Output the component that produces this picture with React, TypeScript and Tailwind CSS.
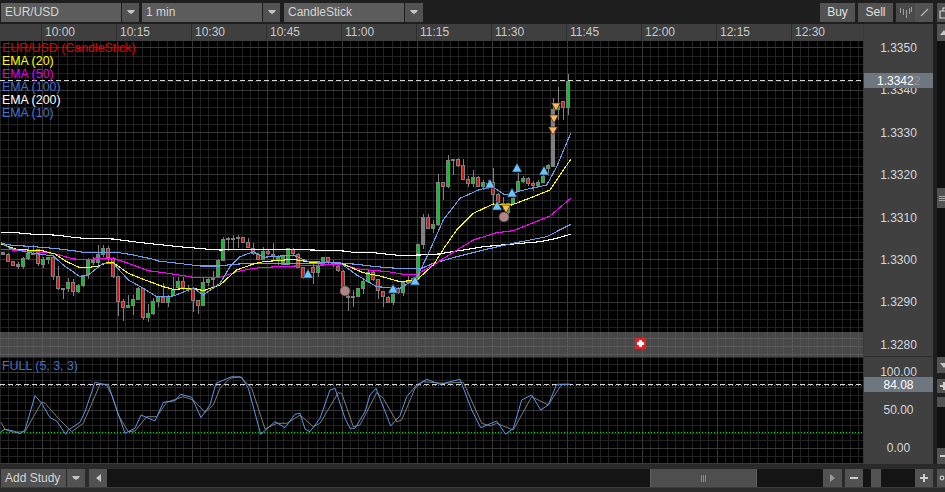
import React from "react";

type C = [number, number, number, number, string];
// wick top, body top, body bottom, wick bottom, colour; measured in 3x crop coordinates
const c4: C[] = [
  [97,97,104,104,"n"],[100,103,125,128,"r"],[123,123,137,138,"r"],[127,133,140,147,"n"],[110,114,141,145,"g"],[80,100,116,120,"g"],[75,98,100,105,"n"],[88,88,133,140,"r"],[110,118,134,143,"g"],[110,112,120,132,"g"],
  [104,110,170,180,"r"],[138,168,208,210,"r"],[205,205,208,237,"n"],[175,186,207,217,"g"],[178,186,215,228,"r"],[192,196,216,220,"g"],[164,166,198,200,"g"],[115,120,165,177,"g"],[112,120,130,135,"n"],[75,103,130,135,"g"],
  [75,85,105,110,"g"],[78,85,115,125,"r"],[110,113,170,172,"r"],[168,168,245,288,"r"],[238,243,263,305,"r"],[225,255,263,265,"g"],[225,238,257,285,"g"],[200,205,240,240,"g"],[203,205,293,298,"r"],[252,280,293,305,"g"],
  [233,243,282,285,"g"],[228,230,245,262,"g"],[190,232,248,250,"r"],[225,230,248,262,"g"],[172,207,228,230,"g"],[170,183,205,210,"g"],[172,183,205,210,"r"],[195,203,206,215,"n"],[200,205,242,275,"r"],[240,240,257,283,"r"],
  [172,186,257,260,"g"],[170,178,188,197,"g"],[153,175,178,205,"n"],[118,120,172,175,"g"],
];
const c5: C[] = [
  [52,57,122,125,"g"],[50,53,57,92,"n"],[45,54,56,88,"n"],[45,51,53,85,"n"],[52,52,68,70,"r"],[55,67,83,85,"r"],[70,85,103,105,"r"],[100,103,120,122,"r"],[82,92,120,122,"g"],[88,92,103,105,"r"],
  [68,102,104,120,"n"],[105,108,120,135,"g"],[105,105,135,136,"g"],[85,85,135,135,"g"],[85,87,103,110,"r"],[100,103,143,145,"r"],[140,142,173,175,"r"],[150,160,165,175,"n"],[128,142,158,192,"r"],[125,138,158,170,"g"],
  [110,112,135,137,"g"],[110,112,125,135,"r"],[120,126,128,140,"n"],[135,138,153,155,"r"],[150,152,200,205,"r"],[205,227,229,275,"n"],[210,227,229,262,"n"],[205,205,230,232,"g"],[180,183,207,222,"g"],[150,155,185,188,"g"],
  [150,155,180,182,"r"],[178,178,213,237,"r"],[213,213,230,260,"r"],[228,230,248,250,"r"],[200,222,248,255,"g"],[200,205,218,220,"r"],[183,187,218,228,"g"],[168,182,184,190,"n"],[170,175,185,190,"g"],
];
const c3: C[] = [
  [522,522,628,630,"g"],[432,442,525,538,"n"],[432,442,476,478,"r"],[450,462,478,488,"g"],[312,337,465,467,"g"],[335,337,352,390,"r"],[255,270,352,354,"g"],[268,267,269,315,"n"],[263,268,288,290,"r"],[268,285,330,332,"r"],
  [318,327,342,352,"r"],[300,322,342,352,"g"],[318,322,350,352,"r"],[330,335,352,360,"g"],[330,338,350,355,"n"],[295,335,375,402,"r"],[368,373,398,400,"r"],[382,399,401,420,"n"],[398,400,430,432,"g"],[365,383,402,405,"g"],
  [308,333,362,365,"g"],[318,323,337,340,"g"],[320,323,343,347,"r"],[332,338,348,362,"r"],[330,335,348,352,"g"],[315,318,338,340,"g"],[283,285,297,320,"g"],[85,118,290,292,"n"],[52,108,120,150,"g"],[92,94,115,150,"r"],[12,32,115,135,"g"],
];

const conv = (a: C[], oy: number): C[] =>
  a.map(([w1, b1, b2, w2, c]) => [oy + w1 / 3, oy + b1 / 3, oy + b2 / 3, oy + w2 / 3, c] as C);
const candles: C[] = [...conv(c4, 220), ...conv(c5, 220), ...conv(c3, 70)];

const P = (ox: number, oy: number, a: number[][]) => a.map(([x, y]) => `${(ox + x / 3).toFixed(1)},${(oy + y / 3).toFixed(1)}`);
const L = (a4: number[][], a5: number[][], a3: number[][]) =>
  [...P(0, 220, a4), ...P(220, 220, a5), ...P(400, 70, a3)].join(" ");

const lines = [
  { c: "#ffffff", p: L(
    [[3,37],[38,37],[100,43],[160,45],[190,48],[220,52],[250,55],[340,57],[385,63],[415,67],[460,72],[490,75],[535,80],[595,85],[625,88],[660,90]],
    [[115,88],[280,90],[370,93],[400,97],[460,98],[505,103],[535,106]],
    [[60,555],[115,552],[190,540],[250,530],[340,522],[420,515],[470,505],[512,493]]) },
  { c: "#6f9fe8", p: L(
    [[3,70],[30,75],[100,80],[160,85],[220,92],[250,97],[350,97],[400,105],[460,118],[475,123],[535,130],[600,138],[660,138]],
    [[40,133],[100,130],[200,132],[330,128],[400,132],[470,140],[530,145]],
    [[60,597],[100,580],[170,560],[250,540],[340,520],[440,500],[512,463]]) },
  { c: "#ff00ff", p: L(
    [[3,88],[40,90],[100,95],[160,100],[220,117],[265,118],[340,115],[385,130],[445,152],[505,160],[580,172],[660,172]],
    [[50,155],[100,145],[170,140],[360,133],[420,148],[505,155],[550,163]],
    [[50,613],[100,585],[150,553],[220,510],[290,488],[340,482],[400,458],[450,438],[512,385]]) },
  { c: "#ffff00", p: L(
    [[3,72],[50,88],[130,93],[165,102],[200,125],[240,143],[290,140],[320,128],[340,128],[385,160],[430,178],[490,200],[520,208],[580,205],[610,212],[660,195]],
    [[50,150],[100,132],[130,125],[220,118],[280,128],[360,128],[430,158],[480,168],[540,185]],
    [[50,630],[100,585],[135,530],[170,480],[220,430],[280,402],[335,405],[400,380],[450,360],[512,268]]) },
  { c: "#6f9fe8", p: L(
    [[3,68],[30,85],[100,100],[160,108],[190,135],[240,170],[265,165],[310,130],[340,130],[385,180],[430,205],[470,230],[520,228],[580,205],[610,225],[660,190]],
    [[30,140],[60,110],[100,95],[130,112],[220,105],[265,125],[360,128],[410,165],[470,200],[540,205]],
    [[50,625],[90,540],[130,450],[180,385],[240,358],[280,352],[315,375],[380,358],[440,345],[470,290],[512,190]]) },
];

const up = [[308,274],[393,289],[415,281],[490,184],[497,206],[512,193],[517,168],[544,171]];
const down = [[506,209],[553,131],[554,119],[556,107]];
const circles = [[345,291],[504,217]];

const Pz = (ox: number, a: number[][]) => a.map(([x, y]) => `${(ox + x / 3).toFixed(1)},${(325 + y / 3).toFixed(1)}`);
const fullBlue = [...Pz(0, [[3,320],[15,313],[40,318],[60,326],[75,315],[105,212],[125,235],[150,278],[170,288],[197,328],[205,315],[240,292],[255,260],[285,172],[320,180],[335,210],[375,325],[405,310],[423,270],[465,288],[490,232],[525,227],[542,208],[575,217],[603,278],[630,240],[648,175],[695,155],[725,157],[745,190],[782,328],[825,290],[855,308],[885,268]]),
  ...Pz(300, [[0,265],[15,312],[30,320],[60,280],[90,195],[105,190],[135,280],[150,310],[165,310],[195,260],[210,210],[228,190],[272,303],[300,272],[320,215],[350,180],[380,163],[420,178],[480,163],[515,255],[542,308],[590,288],[617,328],[640,310],[665,225],[695,210],[722,255],[745,240],[770,178],[810,178]])].join(" ");
const fullGrey = [...Pz(0, [[3,292],[15,313],[40,322],[75,320],[125,232],[135,235],[175,280],[215,320],[250,295],[300,178],[325,178],[355,270],[385,320],[405,318],[440,275],[470,275],[500,232],[550,215],[580,225],[615,262],[640,240],[660,190],[690,160],[720,155],[755,190],[795,312],[830,295],[860,295],[885,280]]),
  ...Pz(300, [[0,270],[40,305],[60,295],[115,203],[125,205],[160,305],[180,300],[230,203],[250,220],[290,290],[305,285],[345,190],[370,170],[430,175],[490,172],[545,295],[570,303],[590,295],[640,315],[695,215],[745,240],[785,178],[810,178]])].join(" ");

function vGrid(y0: number, y1: number, major: boolean) {
  let d = "";
  for (let n = 0; n <= 104; n++) {
    const isMajor = n % 9 === 5;
    if (isMajor === major) {
      const x = Math.round((n * 75) / 9) + 0.5;
      d += `M${x} ${y0}V${y1}`;
    }
  }
  return d;
}
function hGrid(base: number, step: number, every: number, y0: number, y1: number, major: boolean) {
  let d = "";
  for (let n = -60; n <= 60; n++) {
    const y = base + n * step;
    if (y < y0 || y > y1) continue;
    const isMajor = ((n % every) + every) % every === 0;
    if (isMajor === major) d += `M0 ${Math.round(y) + 0.5}H863`;
  }
  return d;
}

function Grid({ y0, y1, base, step, every, minor = "#212121", major = "#383838" }: { y0: number; y1: number; base: number; step: number; every: number; minor?: string; major?: string }) {
  return (
    <g shapeRendering="crispEdges" fill="none">
      <path d={vGrid(y0, y1, false) + hGrid(base, step, every, y0, y1, false)} stroke={minor} />
      <path d={vGrid(y0, y1, true) + hGrid(base, step, every, y0, y1, true)} stroke={major} />
    </g>
  );
}

function Arrow() {
  return (
    <svg viewBox="0 0 8 5" className="w-2 h-[5px]">
      <path d="M0 0H8L6 3H5L4 4.5L3 3H2Z" fill="#c4c4c4" />
    </svg>
  );
}

function Select({ label, className }: { label: string; className: string }) {
  return (
    <div className={`flex h-[19px] ${className}`}>
      <div className="w-[120px] bg-[#5c5c5c] text-[#d4d4d4] pl-1 leading-[19px]">{label}</div>
      <div className="ml-px flex-1 bg-[#525252] flex items-center justify-center">
        <Arrow />
      </div>
    </div>
  );
}

function PriceLabel({ t }: { t: string }) {
  return <div className="h-[14px] leading-[14px] text-center text-[#d2d8de]">{t}</div>;
}

function Btn({ className, children }: { className: string; children?: React.ReactNode }) {
  return <div className={`h-[18px] bg-[#525252] flex items-center justify-center text-[#cfcfcf] ${className}`}>{children}</div>;
}

const Plus = () => (
  <svg viewBox="0 0 8 8" className="w-2 h-2">
    <path d="M3 0H5V3H8V5H5V8H3V5H0V3H3Z" fill="#cfcfcf" />
  </svg>
);
const Minus = () => (
  <svg viewBox="0 0 8 8" className="w-2 h-2">
    <path d="M0 3H8V5H0Z" fill="#cfcfcf" />
  </svg>
);

export default function App() {
  const times = ["10:00", "10:15", "10:30", "10:45", "11:00", "11:15", "11:30", "11:45", "12:00", "12:15"];
  return (
    <div className="w-[945px] h-[492px] overflow-hidden bg-[#1e1e1e] flex flex-col text-[12px] font-['Liberation_Sans',sans-serif]">
      {/* toolbar */}
      <div className="h-[24px] flex items-center pl-px shrink-0">
        <Select label="EUR/USD" className="w-[138px]" />
        <Select label="1 min" className="w-[138px] ml-[3px]" />
        <Select label="CandleStick" className="w-[139px] ml-[4px]" />
        <div className="ml-auto flex items-center h-[19px] text-[#e0e0e0]">
          <div className="w-[35px] h-full bg-[#525252] text-center leading-[19px]">Buy</div>
          <div className="w-[35px] h-full ml-[3px] bg-[#525252] text-center leading-[19px]">Sell</div>
          <div className="ml-[3px] h-full w-[19px] bg-[#4a4a4a] flex items-center justify-center">
            <svg viewBox="0 0 13 11" className="w-[13px] h-[11px]" shapeRendering="crispEdges">
              <path d="M1.5 1V6M4.5 2V8M7.5 3V11M10.5 1V7M12.5 0V5" stroke="#a0a0a0" fill="none" />
            </svg>
          </div>
          <div className="h-full w-[18px] bg-[#525252] flex items-center justify-center">
            <svg viewBox="0 0 9 9" className="w-[9px] h-[9px]">
              <path d="M1 8L8 1" stroke="#b4b4b4" strokeWidth="1.2" fill="none" />
            </svg>
          </div>
          <div className="ml-[4px] h-full w-[8px] bg-[#525252] overflow-hidden pl-[2px] pt-[4px]">
            <svg viewBox="0 0 12 12" className="w-[12px] h-[12px] max-w-none">
              <path d="M1 4H8V11H1Z M4 4V1H11V8H8" stroke="#d0d0d0" strokeWidth="1.2" fill="none" />
            </svg>
          </div>
        </div>
      </div>

      {/* main */}
      <div className="h-[440px] flex shrink-0">
        <div className="w-[933px] flex flex-col bg-[#404040]">
          <div className="h-[17px] flex shrink-0 leading-[17px] text-[#c9c9c9] bg-[#3f3f3f]">
            <div className="w-[41px]" />
            {times.map((t) => (
              <div key={t} className="w-[75px] pl-[3px] border-l border-[#2e2e2e]">{t}</div>
            ))}
            <div className="w-[72px] pl-[3px] border-l border-[#2e2e2e]">12:30</div>
            <div className="flex-1 border-l border-[#383838]" />
          </div>
          <div className="flex-1 flex min-h-0">
            {/* panes */}
            <div className="w-[863px] flex flex-col shrink-0">
              <div className="relative h-[291px] bg-black">
                <svg viewBox="0 41 863 291" className="block w-[863px] h-[291px]">
                  <Grid y0={41} y1={332} base={132} step={8.48} every={5} />
                  <g shapeRendering="crispEdges">
                    {candles.map(([w1, b1, b2, w2, c], k) => {
                      const x = 1 + 5 * k;
                      const t = Math.round(b1);
                      const h = Math.max(2, Math.round(b2) - t);
                      return (
                        <g key={k}>
                          <rect x={x + 1.5} y={Math.round(w1)} width={1} height={Math.max(1, Math.round(w2 - w1))} fill="#808080" />
                          <rect x={x} y={t} width={4} height={h} fill="#808080" />
                          {c !== "n" && h > 2 && <rect x={x + 1} y={t + 1} width={2} height={h - 2} fill={c === "g" ? "#00c81e" : "#d01818"} />}
                        </g>
                      );
                    })}
                    {lines.map((l, i) => (
                      <polyline key={i} points={l.p} fill="none" stroke={l.c} strokeWidth={1.1} />
                    ))}
                  </g>
                  <path d="M0 80.5H863" stroke="#d8d8d8" strokeDasharray="5 3" shapeRendering="crispEdges" />
                  {circles.map(([x, y], i) => (
                    <circle key={i} cx={x} cy={y} r={5} fill="#b08585" stroke="#553c3c" strokeWidth={0.7} />
                  ))}
                  {up.map(([x, y], i) => (
                    <path key={i} d={`M${x} ${y - 5}L${x + 5} ${y + 4}H${x - 5}Z`} fill="#6ec4fa" stroke="#16303f" strokeWidth={0.7} />
                  ))}
                  {down.map(([x, y], i) => (
                    <path key={i} d={`M${x - 4.5} ${y - 4}H${x + 4.5}L${x} ${y + 4}Z`} fill="#ffb55e" stroke="#3d2a14" strokeWidth={0.7} />
                  ))}
                </svg>
                <div className="absolute left-[2px] top-[1px] leading-[13px] text-[12.4px]">
                  <div className="text-[#e00000]">EUR/USD (CandleStick)</div>
                  <div className="text-[#ffff00]">EMA (20)</div>
                  <div className="text-[#e000e0]">EMA (50)</div>
                  <div className="text-[#4472c4]">EMA (100)</div>
                  <div className="text-white">EMA (200)</div>
                  <div className="text-[#4472c4]">EMA (10)</div>
                </div>
              </div>
              <div className="relative h-[25px] bg-[#484848]">
                <svg viewBox="0 332 863 25" className="block w-[863px] h-[25px]">
                  <Grid y0={332} y1={357} base={338} step={8} every={1} minor="#535353" major="#5a5a5a" />
                </svg>
                <div className="absolute left-[635px] top-[6px] w-[11px] h-[11px] bg-[#ee1c24] flex items-center justify-center">
                  <svg viewBox="0 0 7 7" className="w-[7px] h-[7px]">
                    <path d="M2 0H5V2H7V5H5V7H2V5H0V2H2Z" fill="#ffffff" />
                  </svg>
                </div>
              </div>
              <div className="h-px bg-[#2a2a2a]" />
              <div className="relative h-[105px] bg-black">
                <svg viewBox="0 358 863 105" className="block w-[863px] h-[105px]">
                  <Grid y0={358} y1={463} base={448} step={7.6} every={5} />
                  <path d="M0 384.5H863" stroke="#d8d8d8" strokeDasharray="5 3" shapeRendering="crispEdges" />
                  <path d="M0 385.5H863M0 432.5H863" stroke="#00e000" strokeDasharray="1 2" shapeRendering="crispEdges" />
                  <polyline points={fullGrey} fill="none" stroke="#7c7c7c" strokeWidth={1} />
                  <polyline points={fullBlue} fill="none" stroke="#5f96e6" strokeWidth={1} />
                </svg>
                <div className="absolute left-[2px] top-px leading-[14px] text-[12.4px] text-[#4472c4]">FULL (5, 3, 3)</div>
              </div>
              <div className="h-px bg-[#3a3a3a]" />
            </div>
            {/* axis */}
            <div className="flex-1 flex flex-col border-l border-[#383838]">
              <div className="relative h-[316px] shrink-0 flex flex-col gap-[28.4px] border-b border-[#2c2c2c]">
                {["1.3350", "1.3340", "1.3330", "1.3320", "1.3310", "1.3300", "1.3290", "1.3280"].map((t) => (
                  <PriceLabel key={t} t={t} />
                ))}
                <div className="absolute left-0 right-0 top-[32px] h-[15px] bg-[#6e7680] text-white leading-[16px] pl-[13px]">
                  1.3342<span className="text-[#8d949c]">2</span>
                </div>
              </div>
              <div className="relative flex-1 pt-[8px] flex flex-col gap-[24px]">
                <PriceLabel t="100.00" />
                <PriceLabel t="50.00" />
                <PriceLabel t="0.00" />
                <div className="absolute left-0 right-0 top-[20px] h-[15px] bg-[#6e7680] text-white leading-[16px] text-center">84.08</div>
              </div>
            </div>
          </div>
        </div>
        {/* right rail */}
        <div className="ml-[4px] w-[8px] flex flex-col overflow-hidden">
          <div className="h-[17px] bg-[#525252] shrink-0 pl-[3px] pt-[6px]">
            <svg viewBox="0 0 8 5" className="w-2 h-[5px] max-w-none"><path d="M0 5L4 0L8 5Z" fill="#c8c8c8" /></svg>
          </div>
          <div className="h-[147px] bg-[#101010] shrink-0" />
          <div className="h-[20px] bg-[#525252] shrink-0 pl-[2px] flex flex-col justify-center gap-px">
            <div className="h-px w-[6px] bg-[#a8a8a8]" />
            <div className="h-px w-[6px] bg-[#a8a8a8]" />
            <div className="h-px w-[6px] bg-[#a8a8a8]" />
          </div>
          <div className="h-[149px] bg-[#101010] shrink-0" />
          <div className="h-[16px] bg-[#525252] shrink-0 pl-[3px] pt-[6px]">
            <svg viewBox="0 0 8 5" className="w-2 h-[5px] max-w-none"><path d="M0 0L8 0L4 5Z" fill="#c8c8c8" /></svg>
          </div>
          <div className="h-[6px] shrink-0" />
          <div className="h-[14px] bg-[#525252] shrink-0 pl-[3px] pt-[3px]"><Plus /></div>
          <div className="h-[4px] shrink-0" />
          <div className="h-[10px] bg-[#525252] shrink-0" />
          <div className="h-[41px] bg-[#101010] shrink-0" />
          <div className="h-[16px] bg-[#525252] shrink-0 pl-[3px] pt-[4px]"><Minus /></div>
        </div>
      </div>

      {/* bottom */}
      <div className="flex-1 bg-[#2a2a2a] pt-[5px]">
        <div className="flex h-[18px] pl-px">
          <Btn className="w-[65px] !justify-start pl-1 text-[#d4d4d4]">Add Study</Btn>
          <Btn className="w-[18px] ml-px bg-[#4c4c4c]"><Arrow /></Btn>
          <Btn className="w-[18px] ml-[4px]">
            <svg viewBox="0 0 5 8" className="w-[5px] h-2"><path d="M5 0V8L0 4Z" fill="#c8c8c8" /></svg>
          </Btn>
          <div className="w-[716px] flex bg-[#141414]">
            <div className="w-[543px]" />
            <div className="w-[107px] bg-[#4e4e4e] border-x border-[#606060] flex items-center justify-center gap-px">
              <div className="w-px h-[7px] bg-[#8a8a8a]" />
              <div className="w-px h-[7px] bg-[#8a8a8a]" />
              <div className="w-px h-[7px] bg-[#8a8a8a]" />
            </div>
          </div>
          <Btn className="w-[19px]">
            <svg viewBox="0 0 5 8" className="w-[5px] h-2"><path d="M0 0V8L5 4Z" fill="#9a9a9a" /></svg>
          </Btn>
          <Btn className="w-[18px] ml-[3px]"><Minus /></Btn>
          <div className="w-[8px] bg-[#141414]" />
          <div className="w-[10px] bg-[#525252]" />
          <div className="w-[34px] bg-[#141414]" />
          <Btn className="w-[18px]"><Plus /></Btn>
          <Btn className="w-[8px] ml-[4px] overflow-hidden !justify-start pl-[2px]">
            <svg viewBox="0 0 10 10" className="w-[10px] h-[10px] max-w-none"><circle cx="5" cy="5" r="3" fill="none" stroke="#c8c8c8" strokeWidth="2" /></svg>
          </Btn>
        </div>
        <div className="h-px bg-[#3c3c3c]" />
      </div>
    </div>
  );
}
